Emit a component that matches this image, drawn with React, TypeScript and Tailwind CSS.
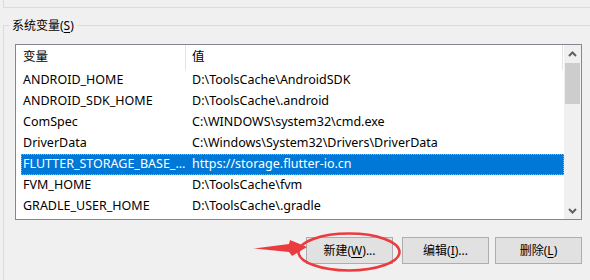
import React from "react";

const rows: [string, string][] = [
  ["ANDROID_HOME", "D:\\ToolsCache\\AndroidSDK"],
  ["ANDROID_SDK_HOME", "D:\\ToolsCache\\.android"],
  ["ComSpec", "C:\\WINDOWS\\system32\\cmd.exe"],
  ["DriverData", "C:\\Windows\\System32\\Drivers\\DriverData"],
  ["FLUTTER_STORAGE_BASE_URL", "https://storage.flutter-io.cn"],
  ["FVM_HOME", "D:\\ToolsCache\\fvm"],
  ["GRADLE_USER_HOME", "D:\\ToolsCache\\.gradle"],
];

function Chevron({ up }: { up: boolean }) {
  return (
    <svg width="9" height="6" viewBox="0 0 9 6">
      <polyline
        points={up ? "1,5 4.5,1.5 8,5" : "1,1 4.5,4.5 8,1"}
        fill="none"
        stroke="#606060"
        strokeWidth="2"
      />
    </svg>
  );
}

function Btn({ label, hot, suffix, className }: { label: string; hot: string; suffix: string; className: string }) {
  return (
    <div
      className={
        "w-[87px] h-[27px] flex items-center justify-center bg-[#e1e1e1] border border-[#adadad] text-black " +
        className
      }
    >
      <span>
        {label}(<span className="underline underline-offset-2">{hot}</span>){suffix}
      </span>
    </div>
  );
}

export default function App() {
  return (
    <div
      className="relative w-[590px] h-[280px] overflow-hidden bg-[#f0f0f0] text-[12px] text-black"
      style={{ fontFamily: '"Noto Sans", "Noto Sans CJK SC", sans-serif' }}
    >
      <div className="ml-[3px] h-[8px] border-l border-b border-[#dcdcdc]" />
      <div className="ml-[3px] mt-[17px] h-[300px] border-l border-t border-[#dcdcdc]">
        <div className="-mt-[9px] ml-[5px] w-fit px-[3px] bg-[#f0f0f0] leading-[18px]">
          系统变量(<span className="underline underline-offset-2">S</span>)
        </div>
        <div className="ml-[11px] mt-[9px] w-[567px] h-[176px] border border-[#828790] bg-white flex">
          <div className="w-[548px] flex flex-col">
            <div className="h-[25px] flex text-[12.5px]">
              <div className="w-[170px] pl-[7px] flex items-center border-r border-[#e5e5e5]">变量</div>
              <div className="w-[377px] pl-[6px] flex items-center border-r border-[#e5e5e5]">值</div>
            </div>
            {rows.map(([k, v], i) => {
              const sel = i === 4;
              return (
                <div
                  key={k}
                  className={
                    "ml-[5px] h-[21px] flex items-center text-[12.5px] " +
                    (sel
                      ? "bg-[#0078d7] text-white outline-1 outline-dotted outline-[#ff9a3c] -outline-offset-1"
                      : "")
                  }
                >
                  <div className="w-[171px] pl-[2px] pr-[5px] truncate whitespace-nowrap">{k}</div>
                  <div className="flex-1 whitespace-nowrap">{v}</div>
                </div>
              );
            })}
          </div>
          <div className="w-[17px] bg-[#f0f0f0] flex flex-col">
            <div className="h-[17px] flex items-center justify-center">
              <Chevron up />
            </div>
            <div className="mt-[1px] mx-[1px] h-[41px] bg-[#cdcdcd]" />
            <div className="flex-1" />
            <div className="h-[17px] flex items-center justify-center">
              <Chevron up={false} />
            </div>
          </div>
        </div>
        <div className="mt-[17px] ml-[302px] flex">
          <Btn label="新建" hot="W" suffix="..." className="" />
          <Btn label="编辑" hot="I" suffix="..." className="ml-[9px]" />
          <Btn label="删除" hot="L" suffix="" className="ml-[6px]" />
        </div>
      </div>
      <svg className="absolute left-0 top-0 pointer-events-none" width="590" height="280" viewBox="0 0 590 280">
        <polygon points="253,248.5 289,244 290,240 307,247 292,256 289,252" fill="#ec3b3f" />
        <ellipse cx="349" cy="252" rx="50.5" ry="18.5" fill="none" stroke="#ec3b3f" strokeWidth="2.6" />
      </svg>
    </div>
  );
}
